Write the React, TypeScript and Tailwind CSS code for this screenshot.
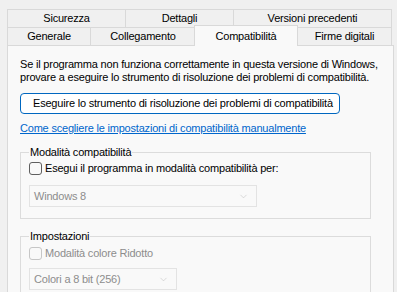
import { ChevronDown } from 'lucide-react';

const font = "font-['Segoe_UI','Liberation_Sans',Arial,sans-serif]";

type TabProps = {
  label: string;
  width: string;
  last?: boolean;
  selected?: boolean;
};

function Tab({ label, width, last, selected }: TabProps) {
  if (selected) {
    return (
      <div
        className={`${width} relative z-10 -mt-[2px] -mx-[1px] h-[21px] flex items-center justify-center bg-[#f9f9f9] border border-b-0 border-[#d9d9d9] text-black`}
      >
        {label}
      </div>
    );
  }
  return (
    <div
      className={`${width} h-[18px] flex items-center justify-center bg-[#f0f0f0] border-t border-l ${last ? 'border-r' : ''} border-[#d9d9d9] text-black`}
    >
      {label}
    </div>
  );
}

function Checkbox({ disabled }: { disabled?: boolean }) {
  return (
    <span
      className={`w-[13px] h-[13px] rounded-[3px] border bg-[#f9f9f9] shrink-0 ${disabled ? 'border-[#c6c6c6]' : 'border-[#5f5f5f]'}`}
    />
  );
}

function Combo({ value, width }: { value: string; width: string }) {
  return (
    <div
      className={`${width} h-[22px] flex items-center justify-between pl-[4px] pr-[7px] border border-[#e3e3e3] bg-[#f9f9f9] text-[#8d8d8d]`}
    >
      <span>{value}</span>
      <ChevronDown size={11} strokeWidth={1} className="text-[#b5b5b5]" />
    </div>
  );
}

function GroupBox({ title, children }: { title: string; children: React.ReactNode }) {
  return (
    <fieldset className="border border-[#dcdcdc] w-[351px] px-[8px] pb-[11px]">
      <legend className="px-[1px] text-black">{title}</legend>
      {children}
    </fieldset>
  );
}

export default function App() {
  return (
    <div className={`${font} w-[397px] h-[292px] overflow-hidden whitespace-nowrap bg-[#f0f0f0] pt-[9px] pl-[7px] text-[11px] tracking-[-0.2px] leading-[13px]`}>
      <div className="flex">
        <Tab label="Sicurezza" width="w-[118px]" />
        <Tab label="Dettagli" width="w-[108px]" />
        <Tab label="Versioni precedenti" width="w-[159px]" last />
      </div>
      <div className="flex h-[18px]">
        <Tab label="Generale" width="w-[83px]" />
        <Tab label="Collegamento" width="w-[105px]" />
        <Tab label="Compatibilità" width="w-[104px]" selected />
        <Tab label="Firme digitali" width="w-[95px]" last />
      </div>
      <div className="w-[387px] h-[260px] bg-[#f9f9f9] border border-[#d9d9d9] pl-[12px] pt-[12px]">
        <p className="text-black">
          Se il programma non funziona correttamente in questa versione di Windows,
          <br />
          provare a eseguire lo strumento di risoluzione dei problemi di compatibilità.
        </p>
        <button className="mt-[9px] h-[21px] w-[320px] rounded-[4px] border border-[#0067c0] bg-white text-left pl-[12px] text-black">
          Eseguire lo strumento di risoluzione dei problemi di compatibilità
        </button>
        <div className="mt-[8px]">
          <a className="text-[#0066cc] underline">Come scegliere le impostazioni di compatibilità manualmente</a>
        </div>
        <div className="mt-[11px]">
          <GroupBox title="Modalità compatibilità">
            <label className="flex items-center gap-[3px] mt-[3px] text-black">
              <Checkbox />
              Esegui il programma in modalità compatibilità per:
            </label>
            <div className="mt-[10px]">
              <Combo value="Windows 8" width="w-[228px]" />
            </div>
          </GroupBox>
        </div>
        <div className="mt-[11px]">
          <GroupBox title="Impostazioni">
            <label className="flex items-center gap-[3px] mt-[4px] text-[#8d8d8d]">
              <Checkbox disabled />
              Modalità colore Ridotto
            </label>
            <div className="mt-[8px]">
              <Combo value="Colori a 8 bit (256)" width="w-[148px]" />
            </div>
          </GroupBox>
        </div>
      </div>
    </div>
  );
}
